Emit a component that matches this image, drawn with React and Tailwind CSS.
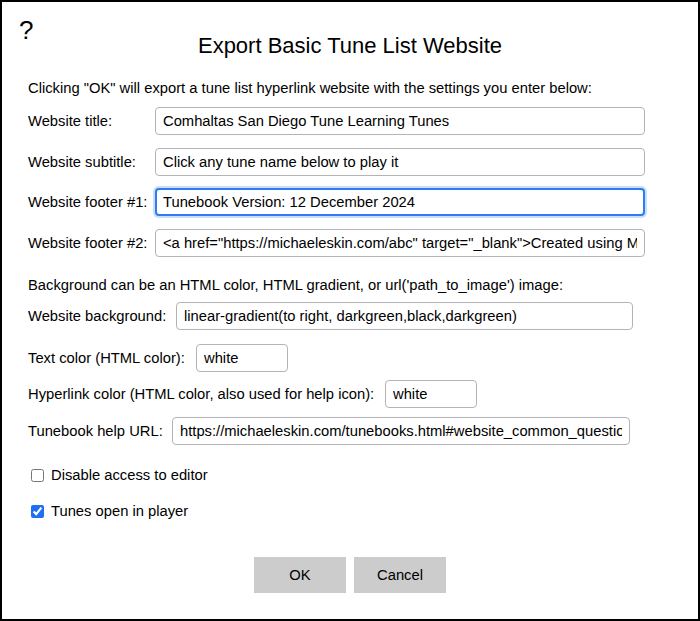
import React, { useState } from "react";

const font = "font-['Liberation_Sans',Arial,Helvetica,sans-serif]";

const inputBase =
  "h-[28px] rounded-[4px] border border-[#b4b4b8] bg-white px-[7px] text-[14.75px] text-black outline-none";

const Field = ({ label, labelWidth, inputWidth, value, focused }) => (
  <div className="flex h-[28px] items-center">
    <label className={`${labelWidth} shrink-0 whitespace-nowrap text-[14.75px] leading-[20px]`}>
      {label}
    </label>
    <input
      type="text"
      defaultValue={value}
      className={
        focused
          ? `${inputWidth} h-[28px] rounded-[4px] border-2 border-[#2f7cf0] bg-white px-[6px] text-[14.75px] text-black outline-none shadow-[0_0_0_2px_#c9defb]`
          : `${inputWidth} ${inputBase}`
      }
    />
  </div>
);

const Check = ({ label, checked, onChange }) => (
  <label className="flex h-[20px] items-center text-[14.75px] leading-[20px]">
    <input
      type="checkbox"
      checked={checked}
      onChange={onChange}
      className="ml-[3px] mr-[7px] h-[13px] w-[13px] accent-[#1f6ff2]"
    />
    {label}
  </label>
);

const App = () => {
  const [disableEditor, setDisableEditor] = useState(false);
  const [openInPlayer, setOpenInPlayer] = useState(true);

  return (
    <div className={`${font} relative h-[621px] w-[700px] border-2 border-black bg-white px-[26px] pt-[30px] text-black`}>
      <div className="absolute left-[17px] top-[13px] text-[26px] leading-[30px]">?</div>

      <h1 className="h-[28px] text-center text-[22px] leading-[28px]">
        Export Basic Tune List Website
      </h1>

      <p className="mt-[18px] text-[14.75px] leading-[20px]">
        Clicking "OK" will export a tune list hyperlink website with the settings you enter below:
      </p>

      <div className="mt-[9px]">
        <Field
          label="Website title:"
          labelWidth="w-[127px]"
          inputWidth="w-[490px]"
          value="Comhaltas San Diego Tune Learning Tunes"
        />
      </div>
      <div className="mt-[13px]">
        <Field
          label="Website subtitle:"
          labelWidth="w-[127px]"
          inputWidth="w-[490px]"
          value="Click any tune name below to play it"
        />
      </div>
      <div className="mt-[12px]">
        <Field
          label="Website footer #1:"
          labelWidth="w-[127px]"
          inputWidth="w-[490px]"
          value="Tunebook Version: 12 December 2024"
          focused
        />
      </div>
      <div className="mt-[13px]">
        <Field
          label="Website footer #2:"
          labelWidth="w-[127px]"
          inputWidth="w-[490px]"
          value={'<a href="https://michaeleskin.com/abc" target="_blank">Created using My Tunebook Maker</a>'}
        />
      </div>

      <p className="mt-[18px] text-[14.75px] leading-[20px]">
        Background can be an HTML color, HTML gradient, or url('path_to_image') image:
      </p>

      <div className="mt-[7px]">
        <Field
          label="Website background:"
          labelWidth="w-[148px]"
          inputWidth="w-[457px]"
          value="linear-gradient(to right, darkgreen,black,darkgreen)"
        />
      </div>
      <div className="mt-[14px]">
        <Field
          label="Text color (HTML color):"
          labelWidth="w-[168px]"
          inputWidth="w-[92px]"
          value="white"
        />
      </div>
      <div className="mt-[8px]">
        <Field
          label="Hyperlink color (HTML color, also used for help icon):"
          labelWidth="w-[357px]"
          inputWidth="w-[92px]"
          value="white"
        />
      </div>
      <div className="mt-[9px]">
        <Field
          label="Tunebook help URL:"
          labelWidth="w-[144px]"
          inputWidth="w-[458px]"
          value="https://michaeleskin.com/tunebooks.html#website_common_questions"
        />
      </div>

      <div className="mt-[20px]">
        <Check
          label="Disable access to editor"
          checked={disableEditor}
          onChange={() => setDisableEditor(!disableEditor)}
        />
      </div>
      <div className="mt-[16px]">
        <Check
          label="Tunes open in player"
          checked={openInPlayer}
          onChange={() => setOpenInPlayer(!openInPlayer)}
        />
      </div>

      <div className="mt-[36px] flex justify-center gap-2">
        <button className="h-[36px] w-[92px] bg-[#cccccc] text-[14.75px] text-black">OK</button>
        <button className="h-[36px] w-[92px] bg-[#cccccc] text-[14.75px] text-black">Cancel</button>
      </div>
    </div>
  );
};

export default App;
